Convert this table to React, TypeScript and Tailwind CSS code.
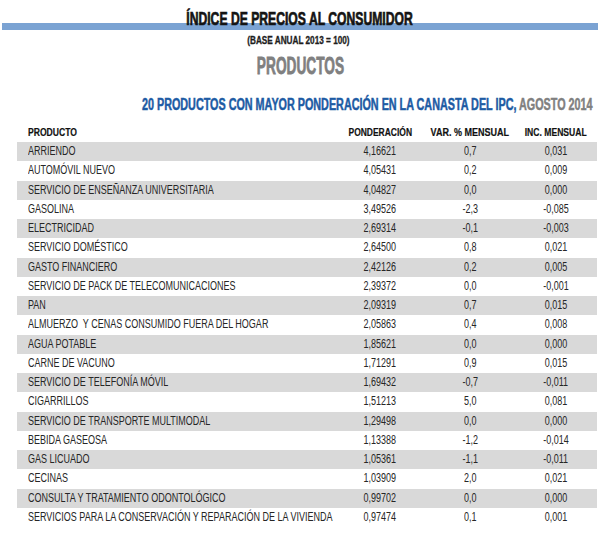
import React from "react";

const rows: [string, string, string, string][] = [
  ["ARRIENDO", "4,16621", "0,7", "0,031"],
  ["AUTOMÓVIL NUEVO", "4,05431", "0,2", "0,009"],
  ["SERVICIO DE ENSEÑANZA UNIVERSITARIA", "4,04827", "0,0", "0,000"],
  ["GASOLINA", "3,49526", "-2,3", "-0,085"],
  ["ELECTRICIDAD", "2,69314", "-0,1", "-0,003"],
  ["SERVICIO DOMÉSTICO", "2,64500", "0,8", "0,021"],
  ["GASTO FINANCIERO", "2,42126", "0,2", "0,005"],
  ["SERVICIO DE PACK DE TELECOMUNICACIONES", "2,39372", "0,0", "-0,001"],
  ["PAN", "2,09319", "0,7", "0,015"],
  ["ALMUERZO\u00a0 Y CENAS CONSUMIDO FUERA DEL HOGAR", "2,05863", "0,4", "0,008"],
  ["AGUA POTABLE", "1,85621", "0,0", "0,000"],
  ["CARNE DE VACUNO", "1,71291", "0,9", "0,015"],
  ["SERVICIO DE TELEFONÍA MÓVIL", "1,69432", "-0,7", "-0,011"],
  ["CIGARRILLOS", "1,51213", "5,0", "0,081"],
  ["SERVICIO DE TRANSPORTE MULTIMODAL", "1,29498", "0,0", "0,000"],
  ["BEBIDA GASEOSA", "1,13388", "-1,2", "-0,014"],
  ["GAS LICUADO", "1,05361", "-1,1", "-0,011"],
  ["CECINAS", "1,03909", "2,0", "0,021"],
  ["CONSULTA Y TRATAMIENTO ODONTOLÓGICO", "0,99702", "0,0", "0,000"],
  ["SERVICIOS PARA LA CONSERVACIÓN Y REPARACIÓN DE LA VIVIENDA", "0,97474", "0,1", "0,001"],
];

export default function App() {
  return (
    <div className="w-[600px] h-[550px] bg-white font-['Liberation_Sans',Arial,sans-serif] overflow-hidden">
      {/* Title with bar */}
      <div className="mx-[2px] h-[30px] flex justify-center pt-[10px] bg-[linear-gradient(to_bottom,transparent_23px,#7ba3d3_23px,#7ba3d3_30px,transparent_30px)]">
        <span className="inline-block whitespace-nowrap origin-center scale-x-[0.676] text-[18px] leading-[18px] font-bold text-[#141414] [-webkit-text-stroke:0.7px]">
          ÍNDICE DE PRECIOS AL CONSUMIDOR
        </span>
      </div>
      <div className="mt-[6px] flex justify-center pr-[4px]">
        <span className="inline-block whitespace-nowrap origin-center scale-x-[0.82] text-[10px] leading-[10px] font-bold text-[#1e1e1e] [-webkit-text-stroke:0.3px]">
          (BASE ANUAL 2013 = 100)
        </span>
      </div>
      <div className="mt-[8px] flex justify-center">
        <span className="inline-block whitespace-nowrap origin-center scale-x-[0.57] text-[24px] leading-[24px] font-bold text-[#808080] [-webkit-text-stroke:0.8px]">
          PRODUCTOS
        </span>
      </div>
      <div className="mt-[19px] flex justify-end pr-[7px]">
        <span className="inline-block whitespace-nowrap origin-right scale-x-[0.674] text-[16px] leading-[16px] font-bold text-[#1d5ba4] [-webkit-text-stroke:0.5px]">
          20 PRODUCTOS CON MAYOR PONDERACIÓN EN LA CANASTA DEL IPC,{" "}
          <span className="text-[#808080]">AGOSTO 2014</span>
        </span>
      </div>
      {/* Table */}
      <div className="mt-[9px] ml-[17px] w-[580px]">
        <div className="grid grid-cols-[318px_90px_90px_82px] h-[20px] items-center text-[11px] font-bold text-[#111] [-webkit-text-stroke:0.2px]">
          <div className="pl-[11px] min-w-0">
            <span className="inline-block whitespace-nowrap origin-left scale-x-[0.78]">PRODUCTO</span>
          </div>
          <div className="flex justify-center min-w-0">
            <span className="inline-block whitespace-nowrap origin-center scale-x-[0.77]">PONDERACIÓN</span>
          </div>
          <div className="flex justify-center min-w-0">
            <span className="inline-block whitespace-nowrap origin-center scale-x-[0.82]">VAR. % MENSUAL</span>
          </div>
          <div className="flex justify-center min-w-0">
            <span className="inline-block whitespace-nowrap origin-center scale-x-[0.78]">INC. MENSUAL</span>
          </div>
        </div>
        {rows.map((r, i) => (
          <div
            key={i}
            className={
              "grid grid-cols-[318px_90px_90px_82px] h-[19.25px] items-center text-[12px] leading-[19.25px] text-[#262626] " +
              (i % 2 === 0 ? "bg-[#d9d9d9]" : "bg-white")
            }
          >
            <div className="pl-[11px] min-w-0">
              <span className="inline-block whitespace-nowrap origin-left scale-x-[0.75]">{r[0]}</span>
            </div>
            <div className="flex justify-center min-w-0">
              <span className="inline-block whitespace-nowrap origin-center scale-x-[0.75]">{r[1]}</span>
            </div>
            <div className="flex justify-center min-w-0">
              <span className="inline-block whitespace-nowrap origin-center scale-x-[0.75]">{r[2]}</span>
            </div>
            <div className="flex justify-center min-w-0">
              <span className="inline-block whitespace-nowrap origin-center scale-x-[0.75]">{r[3]}</span>
            </div>
          </div>
        ))}
      </div>
    </div>
  );
}
